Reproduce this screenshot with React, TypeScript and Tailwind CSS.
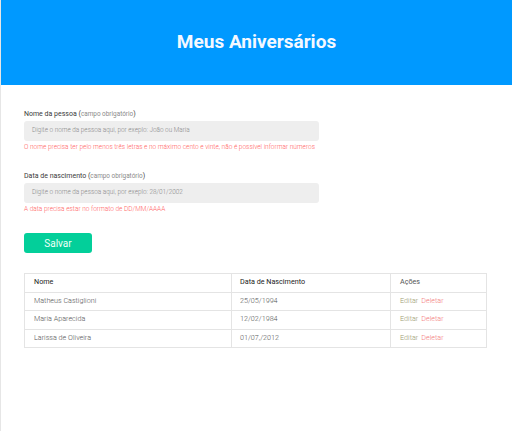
import React from "react";

const rows = [
  { nome: "Matheus Castiglioni", data: "25/05/1994" },
  { nome: "Maria Aparecida", data: "12/02/1984" },
  { nome: "Larissa de Oliveira", data: "01/07,/2012" },
];

function Field({ label, placeholder, error }: { label: string; placeholder: string; error: string }) {
  return (
    <div className="flex flex-col">
      <label className="text-[7px] leading-[10px] text-[#3a3a3a]">
        {label} (<span className="text-[6.4px] text-[#8a8a8a]">campo obrigatório</span>)
      </label>
      <div className="mt-[2px] flex h-[20px] w-[295px] items-center rounded-[3px] bg-[#eeeeee] px-[8px] text-[6.4px] font-light text-[#8a8a8a]">
        {placeholder}
      </div>
      <div className="mt-[2px] text-[6.5px] font-light leading-[8px] text-[#ff5f5f]">{error}</div>
    </div>
  );
}

export default function App() {
  return (
    <div className="min-h-[431px] border-l border-[#e6e6e6] bg-white" style={{ fontFamily: "Roboto, 'Noto Sans', sans-serif" }}>
      <header className="flex h-[85px] items-center justify-center bg-[#0099ff]">
        <h1 className="text-[19px] font-bold text-[#f4f8ff]">Meus Aniversários</h1>
      </header>
      <main className="px-[23px] pt-[24px]">
        <Field
          label="Nome da pessoa"
          placeholder="Digite o nome da pessoa aqui, por exeplo: João ou Maria"
          error="O nome precisa ter pelo menos três letras e no máximo cento e vinte, não é possível informar números"
        />
        <div className="mt-[20px]">
          <Field
            label="Data de nascimento"
            placeholder="Digite o nome da pessoa aqui, por exeplo: 28/01/2002"
            error="A data precisa estar no formato de DD/MM/AAAA"
          />
        </div>
        <button className="mt-[20px] flex h-[20px] w-[68px] items-center justify-center rounded-[3px] bg-[#03cf9a] text-[10px] text-[#f0fff8]">
          Salvar
        </button>
        <table className="mt-[20px] w-[463px] border-collapse text-[7.2px]">
          <thead>
            <tr className="h-[18.5px]">
              <th className="w-[207px] border border-[#e4e4e4] px-[9px] text-left font-normal text-[#222222]">Nome</th>
              <th className="w-[159px] border border-[#e4e4e4] px-[8px] text-left font-normal text-[#222222]">Data de Nascimento</th>
              <th className="border border-[#e4e4e4] px-[9px] text-left font-normal text-[#555555]">Ações</th>
            </tr>
          </thead>
          <tbody className="font-light">
            {rows.map((r) => (
              <tr key={r.nome} className="h-[18.5px]">
                <td className="border border-[#e4e4e4] px-[9px] text-[#555555]">{r.nome}</td>
                <td className="border border-[#e4e4e4] px-[8px] text-[#555555]">{r.data}</td>
                <td className="border border-[#e4e4e4] px-[9px]">
                  <span className="text-[#9a9a70]">Editar</span>
                  <span className="ml-[3px] text-[#f37b7b]">Deletar</span>
                </td>
              </tr>
            ))}
          </tbody>
        </table>
      </main>
    </div>
  );
}
